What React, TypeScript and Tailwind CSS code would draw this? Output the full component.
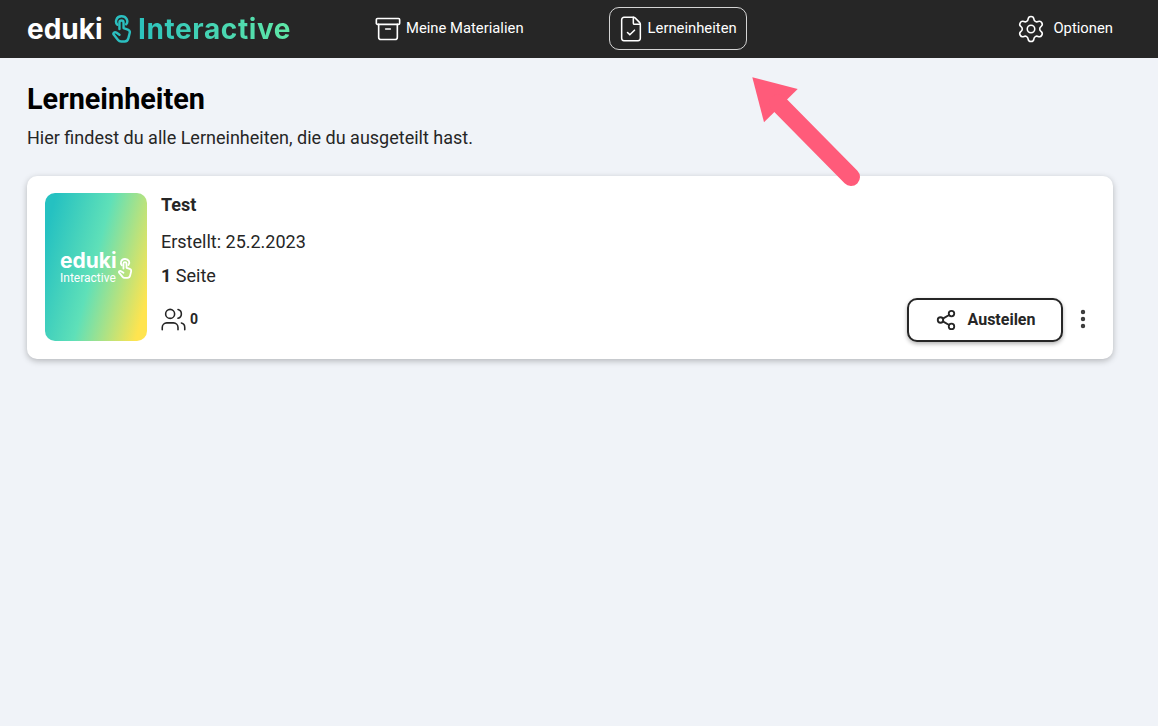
import type { ReactNode } from "react";
import { Settings, Users, Share2, MoreVertical, Archive, FileCheck } from "lucide-react";

function HandIcon({ className }: { className?: string }) {
  return (
    <svg viewBox="0 0 20 30" fill="none" stroke="currentColor" strokeWidth="2.6" strokeLinecap="round" strokeLinejoin="round" className={className}>
      <path d="M5.5 10.5C2.8 7.5 4.2 1.6 9.8 1.4c5.6-.2 8 5.2 5.2 8.6" />
      <path d="M7.8 15V8.2c0-3 4.4-3 4.4 0V14l4.6 1.6c1.8.7 2.4 2 2 3.6l-1.4 5.6c-.5 2.2-1.9 3.6-4 3.6H9.6c-1.4 0-2.4-.5-3.3-1.7L1.6 21c-1-1.6 1-3.4 2.8-2.2l3.4 2.4" />
    </svg>
  );
}

function NavItem({ icon, label, active }: { icon: ReactNode; label: string; active?: boolean }) {
  return (
    <div
      className={
        "flex h-[43px] items-center text-[14.8px] font-normal text-white " +
        (active ? "rounded-[10px] border border-white/80 pl-[7px] pr-[9px]" : "")
      }
    >
      {icon}
      <span>{label}</span>
    </div>
  );
}

export default function App() {
  return (
    <div className="relative min-h-[726px] bg-[#f0f3f8] font-['Roboto',sans-serif] text-[#262626]">
      <header className="flex h-[58px] items-center bg-[#262626] pb-[1px] pl-[27px] pr-[45px]">
        <div className="flex w-[347px] items-center font-['Inter',sans-serif]">
          <span className="w-[75px] text-[28px] font-bold leading-none text-white">eduki</span>
          <HandIcon className="ml-[10px] h-[28px] w-[19px] text-[#2bbfc0]" />
          <span className="ml-[7px] bg-gradient-to-r from-[#2bc2bd] to-[#5fe7a6] bg-clip-text text-[28px] font-bold leading-none tracking-[0.6px] text-transparent">
            Interactive
          </span>
        </div>
        <NavItem icon={<Archive className="mr-[4px] h-[28px] w-[28px]" strokeWidth={1.4} />} label="Meine Materialien" />
        <div className="ml-[85px]">
          <NavItem active icon={<FileCheck className="mr-[3px] h-[28px] w-[28px]" strokeWidth={1.3} />} label="Lerneinheiten" />
        </div>
        <div className="ml-auto">
          <NavItem icon={<Settings className="mr-[7px] h-[30px] w-[30px]" strokeWidth={1.25} />} label="Optionen" />
        </div>
      </header>

      <main className="pl-[27px] pr-[45px] pt-[24px]">
        <h1 className="text-[28.8px] font-bold leading-[34px] text-black">Lerneinheiten</h1>
        <p className="mt-[10px] text-[18px] leading-[24px] text-[#262626]">
          Hier findest du alle Lerneinheiten, die du ausgeteilt hast.
        </p>

        <section className="mt-[26px] flex h-[183px] rounded-[10px] bg-white py-[17px] pl-[18px] pr-[18px] shadow-[0_2px_6px_rgba(0,0,0,0.25)]">
          <div className="flex h-[148px] w-[102px] shrink-0 items-center rounded-[10px] bg-[linear-gradient(105deg,#25c1c1_8%,#5fe0b8_48%,#ffe44f_92%)] pl-[15px] text-white">
            <div className="flex flex-col">
              <span className="font-['Inter',sans-serif] text-[21px] font-bold leading-[22px]">eduki</span>
              <span className="text-[12px] font-normal leading-[13px]">Interactive</span>
            </div>
            <HandIcon className="ml-[1px] mt-[2px] h-[23px] w-[14px] shrink-0" />
          </div>

          <div className="ml-[14px] flex flex-1 flex-col">
            <h2 className="text-[18px] font-bold leading-[24px]">Test</h2>
            <p className="mt-[13px] text-[18px] leading-[24px]">Erstellt: 25.2.2023</p>
            <p className="mt-[10px] text-[18px] leading-[24px]">
              <b>1</b> Seite
            </p>
            <div className="mt-auto flex items-center justify-between">
              <div className="flex items-center">
                <Users className="-ml-[1px] -mt-[1px] h-[27px] w-[27px]" strokeWidth={1.4} />
                <span className="-mt-[2px] ml-[3px] text-[14px] font-bold">0</span>
              </div>
              <div className="flex items-center">
                <button className="flex h-[44px] w-[156px] items-center justify-center rounded-[10px] border-2 border-[#262626] bg-white text-[16px] font-bold shadow-[0_2px_4px_rgba(0,0,0,0.3)]">
                  <Share2 className="mr-[11px] h-[22px] w-[22px]" strokeWidth={2} />
                  Austeilen
                </button>
                <MoreVertical className="-mt-[3px] ml-[8px] h-[24px] w-[24px] text-[#3a3a3a]" strokeWidth={2.4} />
              </div>
            </div>
          </div>
        </section>
      </main>

      <svg viewBox="0 0 120 125" className="absolute left-[745px] top-[70px] h-[125px] w-[120px]" fill="none">
        <path d="M7.3 7.3 L52.7 19 L19 52.3 Z" fill="#ff5b7a" />
        <path d="M33 33 L106 107" stroke="#ff5b7a" strokeWidth="18" strokeLinecap="round" />
      </svg>
    </div>
  );
}
